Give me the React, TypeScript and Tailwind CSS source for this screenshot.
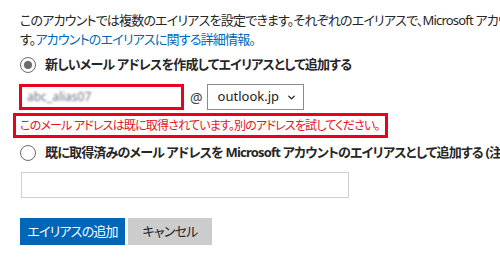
import { ChevronDown } from "lucide-react";

const font = "[font-family:'Noto_Sans','Noto_Sans_CJK_JP',sans-serif] [font-feature-settings:'palt']";

function Radio({ checked }: { checked?: boolean }) {
  return (
    <span className="flex h-[16px] w-[16px] shrink-0 items-center justify-center rounded-full border border-[#6b6b6b] bg-white">
      {checked && <span className="h-[8px] w-[8px] rounded-full bg-[#6b6b6b]" />}
    </span>
  );
}

export default function App() {
  return (
    <div className={`h-[257px] w-[500px] overflow-hidden bg-white text-[13px] tracking-[-0.8px] text-[#262626] ${font}`}>
      <div className="px-[20px] pt-[11px]">
        <p className="whitespace-nowrap leading-[19px]">
          このアカウントでは複数のエイリアスを設定できます。それぞれのエイリアスで、Microsoft アカウントにサインインできま
        </p>
        <p className="whitespace-nowrap leading-[19px]">
          す。<span className="text-[#0067b8]">アカウントのエイリアスに関する詳細情報。</span>
        </p>

        <div className="mt-[6px] flex h-[20px] items-center gap-[9px] whitespace-nowrap">
          <Radio checked />
          <span className="font-bold">新しいメール アドレスを作成してエイリアスとして追加する</span>
        </div>

        <div className="mt-[9px] flex items-center">
          <div className="-ml-[1px] flex h-[26px] w-[165px] items-center border-[3px] border-[#e8001c] px-[5px]">
            <span className="tracking-normal text-[12px] text-[#6e6e86] blur-[1px]">abc_alias07</span>
          </div>
          <span className="ml-[6px] text-[14px] tracking-normal text-[#444]">@</span>
          <div className="ml-[4px] flex h-[26px] w-[97px] items-center justify-between border border-[#8a8a8a] pl-[10px] pr-[6px]">
            <span className="text-[13px] tracking-normal text-[#222]">outlook.jp</span>
            <ChevronDown className="h-[11px] w-[11px] text-[#222]" strokeWidth={3} />
          </div>
        </div>

        <div className="mt-[3px] -ml-[7px] flex h-[25px] w-[375px] items-center whitespace-nowrap border-[3px] border-[#e8001c] px-[4px] text-[12px] text-[#e81123]">
          このメール アドレスは既に取得されています。別のアドレスを試してください。
        </div>

        <div className="mt-[5px] flex h-[20px] items-center gap-[9px] whitespace-nowrap">
          <Radio />
          <span className="font-bold">既に取得済みのメール アドレスを Microsoft アカウントのエイリアスとして追加する (注意: 既存のアドレス)</span>
        </div>

        <div className="mt-[9px] ml-[1px] h-[26px] w-[328px] border border-[#cfcfcf]" />

        <div className="mt-[20px] flex gap-[3px]">
          <button className="h-[27px] w-[105px] bg-[#0067b8] text-[13px] text-white">エイリアスの追加</button>
          <button className="h-[27px] w-[84px] bg-[#cccccc] text-[13px] text-[#222]">キャンセル</button>
        </div>
      </div>
    </div>
  );
}
